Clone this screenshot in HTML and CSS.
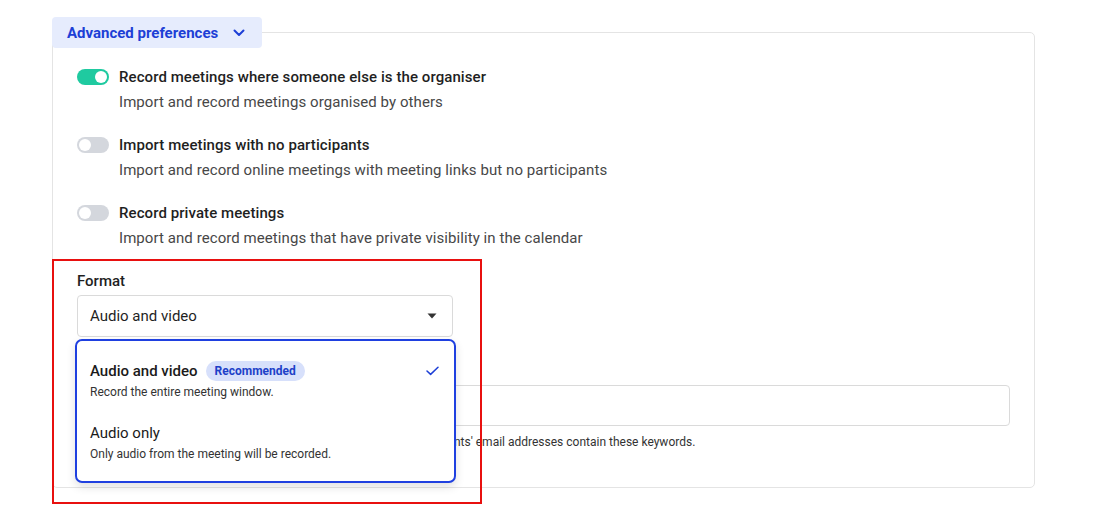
FILE: index.html
```html
<!DOCTYPE html>
<html lang="en">
<head>
<meta charset="utf-8">
<title>Advanced preferences</title>
<link rel="stylesheet" href="styles.css">
</head>
<body>
<div class="section">
  <button class="tab">
    <span>Advanced preferences</span>
    <svg class="chev" width="12" height="8" viewBox="0 0 12 8"><path d="M1.5 1.5 L6 6 L10.5 1.5" fill="none" stroke="#1d3fd6" stroke-width="2" stroke-linecap="round" stroke-linejoin="round"/></svg>
  </button>
  <div class="card">
    <div class="row">
      <span class="toggle on"><span class="knob"></span></span>
      <div class="row-text">
        <div class="row-title">Record meetings where someone else is the organiser</div>
        <div class="row-sub">Import and record meetings organised by others</div>
      </div>
    </div>
    <div class="row">
      <span class="toggle"><span class="knob"></span></span>
      <div class="row-text">
        <div class="row-title">Import meetings with no participants</div>
        <div class="row-sub">Import and record online meetings with meeting links but no participants</div>
      </div>
    </div>
    <div class="row">
      <span class="toggle"><span class="knob"></span></span>
      <div class="row-text">
        <div class="row-title">Record private meetings</div>
        <div class="row-sub">Import and record meetings that have private visibility in the calendar</div>
      </div>
    </div>

    <div class="field format">
      <div class="label">Format</div>
      <div class="select-wrap">
        <div class="select">
          <span>Audio and video</span>
          <svg class="caret" width="10" height="6" viewBox="0 0 10 6"><path d="M0.5 0.5 H9.5 L5 5.5 Z" fill="#333"/></svg>
        </div>
        <div class="popup">
          <div class="option">
            <div class="opt-head">
              <span class="opt-title strong">Audio and video</span>
              <span class="badge">Recommended</span>
              <svg class="check" width="13" height="10" viewBox="0 0 13 10"><path d="M1 5 L4.6 8.4 L12 1.2" fill="none" stroke="#1d3fd6" stroke-width="1.5" stroke-linecap="round" stroke-linejoin="round"/></svg>
            </div>
            <div class="opt-desc">Record the entire meeting window.</div>
          </div>
          <div class="option">
            <div class="opt-head">
              <span class="opt-title">Audio only</span>
            </div>
            <div class="opt-desc">Only audio from the meeting will be recorded.</div>
          </div>
        </div>
      </div>
    </div>

    <div class="field keywords">
      <div class="input"></div>
      <div class="help">Don't import or record meetings if any of the meeting's invited participants' email addresses contain these keywords.</div>
    </div>
  </div>
  <div class="highlight"></div>
</div>
</body>
</html>
```

FILE: styles.css
```css
* { box-sizing: border-box; }

html, body {
  margin: 0;
  padding: 0;
  background: #ffffff;
}

body {
  font-family: Roboto, "Liberation Sans", Arial, sans-serif;
  color: #1f1f1f;
  width: 1107px;
  height: 517px;
  overflow: hidden;
}

.section {
  position: relative;
  margin-left: 52px;
  padding-top: 17px;
  width: 983px;
}

.tab {
  position: relative;
  z-index: 1;
  display: flex;
  align-items: center;
  gap: 15px;
  height: 31px;
  width: 210px;
  padding: 0 0 0 15px;
  border: none;
  border-radius: 4px;
  background: #e6ecfd;
  color: #1d3fd6;
  font-family: inherit;
  font-size: 15px;
  font-weight: 700;
  cursor: pointer;
}

.chev { display: block; margin-top: 1px; }

.card {
  margin-top: -16px;
  border: 1px solid #e4e4e4;
  border-radius: 5px;
  padding: 34px 24px 37px;
}

.row {
  display: flex;
  align-items: flex-start;
  gap: 10px;
}

.row + .row { margin-top: 23px; }

.toggle {
  flex: none;
  position: relative;
  display: flex;
  align-items: center;
  width: 32px;
  height: 16px;
  margin-top: 2px;
  border-radius: 8px;
  background: #d4d7dd;
  padding: 2px;
}

.toggle .knob {
  width: 12px;
  height: 12px;
  border-radius: 50%;
  background: #ffffff;
}

.toggle.on {
  background: #1fcaa0;
  justify-content: flex-end;
}

.row-title {
  font-size: 15px;
  line-height: 20px;
  font-weight: 500;
  letter-spacing: 0.08px;
  color: #1f1f1f;
}

.row-sub {
  margin-top: 5px;
  font-size: 15px;
  line-height: 20px;
  letter-spacing: 0.07px;
  color: #474747;
}

.field.format { margin-top: 23px; }
.field.keywords { margin-top: 48px; }

.label {
  font-size: 15px;
  line-height: 20px;
  font-weight: 500;
  color: #1f1f1f;
}

.select-wrap {
  position: relative;
  margin-top: 4px;
  width: 376px;
}

.select {
  display: flex;
  align-items: center;
  justify-content: space-between;
  height: 42px;
  padding: 0 15px 0 12px;
  border: 1px solid #dadada;
  border-radius: 4px;
  background: #fff;
  font-size: 15px;
  color: #1f1f1f;
}

.caret { display: block; }

.popup {
  position: absolute;
  z-index: 3;
  top: calc(100% + 2px);
  left: -2px;
  width: 381px;
  padding: 9px 0 7px;
  background: #ffffff;
  border: 2px solid #1f40e0;
  border-radius: 7px;
  box-shadow: 0 4px 10px rgba(0, 0, 0, 0.12);
}

.option {
  padding: 11px 15px 12px 13px;
}

.opt-head {
  display: flex;
  align-items: center;
  height: 20px;
}

.opt-title {
  font-size: 15px;
  line-height: 20px;
  color: #1a1a1a;
}

.opt-title.strong { font-weight: 500; }

.badge {
  margin-left: 8px;
  height: 20px;
  padding: 0 9px;
  border-radius: 10px;
  background: #d7e0fb;
  color: #1d3fc8;
  font-size: 12px;
  font-weight: 700;
  line-height: 20px;
}

.check {
  display: block;
  margin-left: auto;
}

.opt-desc {
  margin-top: 3px;
  font-size: 12px;
  line-height: 16px;
  color: #333;
}

.input {
  height: 41px;
  border: 1px solid #dadada;
  border-radius: 4px;
}

.help {
  margin-top: 8px;
  font-size: 12px;
  line-height: 16px;
  color: #333;
  white-space: nowrap;
}

.highlight {
  position: absolute;
  z-index: 4;
  left: 0;
  top: 259px;
  width: 430px;
  height: 245px;
  border: 2px solid #e8100f;
  pointer-events: none;
}
```
